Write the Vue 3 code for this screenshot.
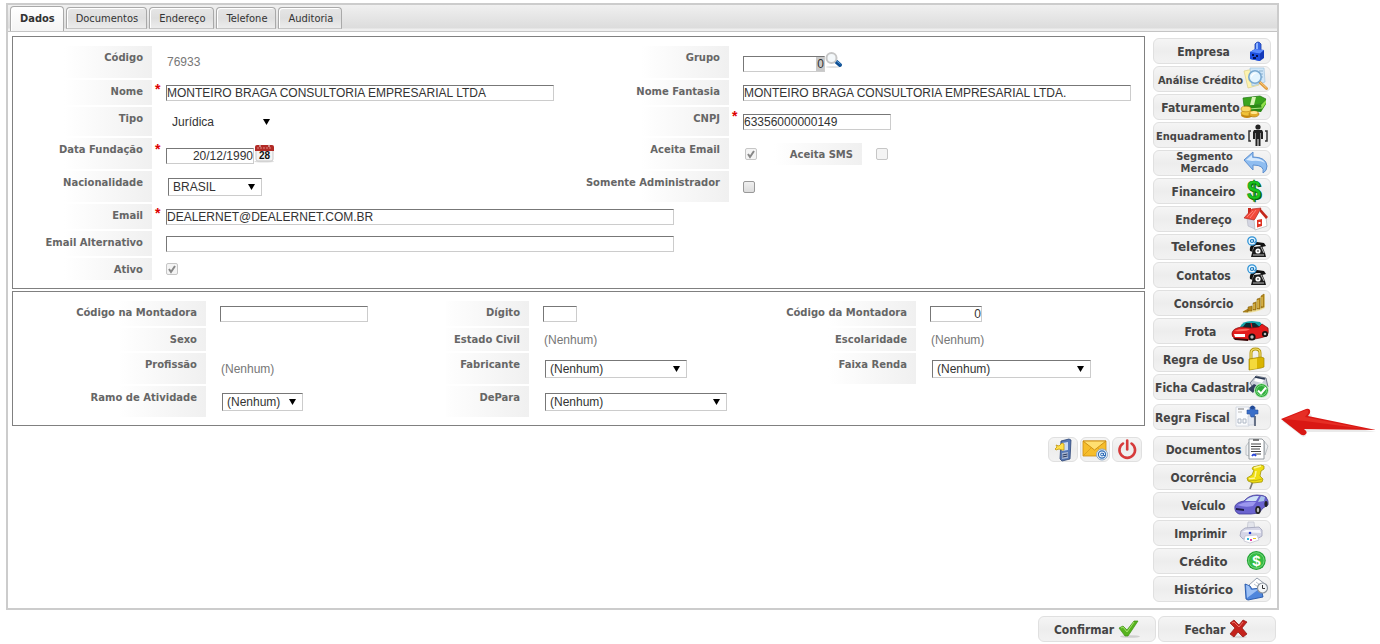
<script setup>
import { ref } from 'vue'

const tabs = ['Dados', 'Documentos', 'Endereço', 'Telefone', 'Auditoria']
const activeTab = ref('Dados')

const form = ref({
  grupo: '0',
  nome: 'MONTEIRO BRAGA CONSULTORIA EMPRESARIAL LTDA',
  fantasia: 'MONTEIRO BRAGA CONSULTORIA EMPRESARIAL LTDA.',
  cnpj: '63356000000149',
  data: '20/12/1990',
  email: 'DEALERNET@DEALERNET.COM.BR',
  emailAlt: '',
  codMontadora: '',
  digito: '',
  codDaMontadora: '0',
})

const phoneArt = `
  <path d="M4 16c-1-5 3-9 7-9l7 1 2 3-4 1-2-2-4 0c-2 1-4 4-3 7z" fill="#111"/>
  <path d="M8 12l8-1 3 7 1 4H5l1-4z" fill="#1a1a1a"/>
  <circle cx="12" cy="16" r="2.600" fill="#fff"/><circle cx="12" cy="16" r="1.100" fill="#777"/>
  <path d="M7 20h11M15 12l3 6" stroke="#bbb" stroke-width="1" fill="none"/>
  <circle cx="6" cy="6" r="4.200" fill="#e9f6ff" stroke="#2f93d6" stroke-width="1.300"/>
  <circle cx="6" cy="6" r="1.500" fill="none" stroke="#1577bd" stroke-width="1.200"/>
  <path d="M7.600 4.500v2.200q1 1.400 2-.2" fill="none" stroke="#1577bd" stroke-width="1"/>`

const actions = [
  { label: 'Empresa', w: 26, art: `
    <path d="M11 5q3-4 6 0v7h-6z" fill="#3567e8" stroke="#173aa8" stroke-width=".8"/>
    <path d="M12 5q1-2 2-1v7h-2z" fill="#8fb4ff"/>
    <path d="M6 13l5-3 9 1v8l-4 3-10-2z" fill="#1238b8"/>
    <path d="M6 13l10 1.500v7.500l-10-2z" fill="#1d4fe0"/>
    <path d="M6 13l5-3 9 1-4 3.500z" fill="#5a8bff"/>
    <path d="M8 15h2v2H8zM12 16h2v2h-2zM9 18h3v2H9z" fill="#06124e"/>` },
  { label: 'Análise Crédito', size: 'small', w: 26, snug: true, art: `
    <path d="M0 4l10-2 5 16-11 3z" fill="#fdf3b0" stroke="#dccf86" stroke-width=".7"/>
    <path d="M6 1l14 0 1 14-13 4z" fill="#cfe6f8" stroke="#9fc2de" stroke-width=".7"/>
    <path d="M15 4h4M16 7h3M16 10h3" stroke="#8db2cf" stroke-width="1"/>
    <path d="M15.500 15l7 6.500" stroke="#e09a3a" stroke-width="3" stroke-linecap="round"/>
    <path d="M15.500 14.500l7 6.500" stroke="#f7cc86" stroke-width="1"/>
    <circle cx="11" cy="10" r="6.200" fill="#e4f5ff" stroke="#7aa9d0" stroke-width="1.600"/>
    <path d="M7 9q2-4 6-3-4 1-6 5z" fill="#fff"/>` },
  { label: 'Faturamento', w: 30, snug: true, art: `
    <path d="M3 3l17-2 6 3-4 5-18 2z" fill="#3aa51d" stroke="#1d7410" stroke-width=".7"/>
    <path d="M4 11l18-2 4-5v5l-5 8-16-1z" fill="#2b8a14"/>
    <path d="M21 10l5-5v3l-4 6z" fill="#8fe04a"/>
    <path d="M12 2l4 0-2 8-4 0z" fill="#d8f3b6"/>
    <path d="M8 14l14-1" stroke="#a9e37f" stroke-width="1"/>
    <ellipse cx="7" cy="20" rx="6" ry="3" fill="#c98a12"/><ellipse cx="7" cy="18" rx="6" ry="3" fill="#f0c23a" stroke="#b57c0e" stroke-width=".6"/>
    <ellipse cx="6" cy="14" rx="5" ry="2.800" fill="#f9da68" stroke="#b57c0e" stroke-width=".6"/>
    <ellipse cx="14" cy="19" rx="5" ry="3" fill="#e3aa28" stroke="#a8730c" stroke-width=".6"/>
    <ellipse cx="14" cy="17.500" rx="3.500" ry="1.600" fill="#ffe68c"/>` },
  { label: 'Enquadramento', size: 'small', w: 26, snug: true, art: `
    <path d="M7 8H5v10h2M21 8h2v10h-2" fill="none" stroke="#333" stroke-width="1.500"/>
    <circle cx="14" cy="4" r="2.600" fill="#222"/>
    <path d="M10 7h8l1 2v7h-2v-6h-.5v13h-2v-7h-1v7h-2V10H11v6H9V9z" fill="#222"/>` },
  { label: 'Segmento Mercado', size: 'wrap', w: 26, art: `
    <path d="M0 9l9-8v5q13 0 14 9 0 5-4 7 2-8-10-8v5z" fill="#8fbdf0" stroke="#5c8fd0" stroke-width="1" stroke-linejoin="round"/>
    <path d="M2 9l6-5v3q10 0 13 5-5-3-13-2z" fill="#d8eafd"/>` },
  { label: 'Financeiro', w: 26, art: `
    <text x="11" y="21" text-anchor="middle" font-family="Liberation Sans, sans-serif" font-size="26" font-weight="700" fill="#0b5d0b">$</text>
    <text x="10" y="20" text-anchor="middle" font-family="Liberation Sans, sans-serif" font-size="25" font-weight="700" fill="#19c51c" stroke="#0b7a0d" stroke-width=".5">$</text>` },
  { label: 'Endereço', w: 26, art: `
    <path d="M3 11l8 1v10l-7-3z" fill="#d4d6e2" stroke="#a9abb8" stroke-width=".5"/>
    <path d="M10 12l6-8 6 6 1 9-12 4z" fill="#fff" stroke="#b5b5b5" stroke-width=".7"/>
    <path d="M16 1l8 9-2 2-6-7z" fill="#c4281c"/>
    <path d="M0 11L8 2l9-1-6 11-1 1z" fill="#f2493a" stroke="#a81f17" stroke-width=".6"/>
    <path d="M3 10l6-6M6 11l6-8" stroke="#ff9186" stroke-width=".8"/>
    <path d="M4 1h3v3L4 7z" fill="#c8291d"/>
    <path d="M13 13l5-1v7l-5 1.500z" fill="#df3324"/><path d="M14.500 15h2v2h-2z" fill="#fff"/>` },
  { label: 'Telefones', size: 'wide', w: 24, art: phoneArt },
  { label: 'Contatos', w: 24, art: phoneArt },
  { label: 'Consórcio', w: 28, art: `
    <path d="M0 21q3-3 7-3l4-3 3-5 3-2 3-4 3-1v14l-4 2-3 1-4 1-6 1z" fill="#efdf9b"/>
    <path d="M1 21l5-3v3zM6 20v-4l4-1v5zM11 19v-7l3-1v8zM15 18V8l3-1v11zM19 17V5l3-2v13z" fill="#b98a1c" stroke="#7b5a0e" stroke-width=".5"/>
    <path d="M12 13v5M16 9v8M20 6v9" stroke="#ecd06a" stroke-width="1"/>` },
  { label: 'Frota', size: 'early', w: 39, art: `
    <path d="M9 8q2-6 12-6l8 1 5 6z" fill="#15a3a8"/>
    <path d="M11 9l4-5h9l6 5z" fill="#0c2b33"/><path d="M20 4l1 5" stroke="#e22" stroke-width="1.200"/>
    <path d="M1 14q1-5 10-6l9 1 8-1 3-3 6 4q1 5-1 8l-7 2-11 2-13-1q-5-2-4-6z" fill="#e21c1c" stroke="#7d0b0b" stroke-width=".7"/>
    <path d="M3 12q6-3 16-2-3 3-16 2z" fill="#ff6a5c"/>
    <path d="M3 15h11v3H4z" fill="#fff"/><path d="M2 19l15 1v2L4 21z" fill="#3a0707"/>
    <circle cx="21" cy="18" r="3.600" fill="#111"/><circle cx="21" cy="18" r="1.700" fill="#bbb"/>
    <circle cx="34" cy="15" r="3" fill="#111"/><circle cx="34" cy="15" r="1.300" fill="#bbb"/>` },
  { label: 'Regra de Uso', w: 26, art: `
    <path d="M7 12V6q0-4 4.500-4T16 6v6" fill="none" stroke="#b3960c" stroke-width="3"/>
    <path d="M7 12V6q0-4 4.500-4T16 6v6" fill="none" stroke="#f5e272" stroke-width="1.200"/>
    <path d="M5 12l12-2 3 1v9l-3 1-12 2z" fill="#d9b400" stroke="#a48600" stroke-width=".7"/>
    <path d="M6 12.500l7-1v10l-7 1z" fill="#f4d93c"/>` },
  { label: 'Ficha Cadastral', w: 24, start: true, art: `
    <path d="M4 8l6-7 10 2 2 9-12 5z" fill="#c9ced8" stroke="#596273" stroke-width=".8"/>
    <path d="M10 3l8 2-2 3-8-2z" fill="#fff"/><path d="M9 2l10 2" stroke="#28364f" stroke-width="1.300"/>
    <path d="M2 14l6-5 4 2-5 7z" fill="#33415e"/>
    <circle cx="15.500" cy="15.500" r="7" fill="#2fae3a" stroke="#d9f1da" stroke-width="1"/>
    <circle cx="15.500" cy="15.500" r="5" fill="none" stroke="#8edb93" stroke-width=".8"/>
    <path d="M12 15.500l3 3 5-6" fill="none" stroke="#fff" stroke-width="2"/>` },
  { label: 'Regra Fiscal', w: 34, start: true, fiscal: true, art: `
    <path d="M0 2h13v19H0z" fill="#fafbfd" stroke="#cdd3dc" stroke-width=".8"/>
    <path d="M2 4h6" stroke="#777" stroke-width="1"/><path d="M2 7h4" stroke="#bbb"/>
    <path d="M2 14h3v4H2zM7 14h3v4H7z" fill="none" stroke="#aeb7c4" stroke-width="1"/>
    <path d="M12 11h6v9h-6z" fill="#e5e9f0" stroke="#c3cad6" stroke-width=".6"/><path d="M19 11v10" stroke="#3b4a66" stroke-width="1.500"/>
    <path d="M14 2h5v3h3v4h-3l-1 3h-3l-1-3h-3V5h3z" fill="#3b6fc9" stroke="#2a519c" stroke-width=".6"/>
    <circle cx="16.500" cy="2.500" r="2" fill="#234a94"/>` },
  { label: 'Documentos', w: 26, above: true, art: `
    <path d="M2 9l3-4v14l-3-1zM20 4l4 5-3 9z" fill="#eef0f2" stroke="#aab0b6" stroke-width=".7"/>
    <path d="M5 2h13l2 2v18H5z" fill="#fff" stroke="#8d9399" stroke-width=".9"/>
    <path d="M9 3h6" stroke="#555" stroke-width="1.500"/>
    <path d="M7 7h10M7 9.500h10M7 12h9M7 14.500h10M11 17h6" stroke="#444" stroke-width="1.200"/>
    <path d="M8 19q2-3 4 0" stroke="#2844d8" stroke-width="1.800" fill="none"/>` },
  { label: 'Ocorrência', w: 26, art: `
    <path d="M9 16l-3 8" stroke="#777" stroke-width="1.700"/>
    <path d="M9 2l8-2 3 1 0 3-3 2-1 5 3 3-1 3-9 1-5-2-1-3 5-3 2-5-2-1z" fill="#efdd12" stroke="#a59708" stroke-width=".8"/>
    <path d="M10 3l7-2M12 6l-1 6M5 14l6-1" stroke="#fff89a" stroke-width="1.500" fill="none"/>
    <path d="M4 15q7 2 14-1" stroke="#b7a80c" stroke-width=".8" fill="none"/>` },
  { label: 'Veículo', w: 36, art: `
    <path d="M1 13q2-4 9-5 5-6 13-6 7 0 9 2 3 4 2 8l-5 3-4 5-8 1H5q-5-2-4-8z" fill="#6a63cf" stroke="#403a98" stroke-width=".8"/>
    <path d="M11 8q5-5 12-5l2 0-3 5z" fill="#cfe3f7"/><path d="M27 3l4 1-1 4-6 1z" fill="#aac4ea"/>
    <path d="M3 12q9-4 19-3l-3 4q-8 2-16-1z" fill="#9c97ee"/>
    <path d="M2 15l8 1v2l-8-1z" fill="#1e1c48"/>
    <ellipse cx="24" cy="17" rx="2.800" ry="4" fill="#222"/><ellipse cx="24" cy="17" rx="1.200" ry="2.200" fill="#bbb"/>
    <ellipse cx="32" cy="11" rx="1.600" ry="3" fill="#222"/>` },
  { label: 'Imprimir', size: 'early', w: 30, art: `
    <path d="M8 1h6l1 9H7z" fill="#e3e5ec" stroke="#bfc2cd" stroke-width=".7"/>
    <path d="M1 10l4-3 14-1 3 3v6l-5 3H3l-3-3z" fill="#d5d6e6" stroke="#9d9fb8" stroke-width=".8"/>
    <path d="M2 11l4-2 14 0 1 3z" fill="#f5f5fb"/><circle cx="10" cy="12" r="1.300" fill="#2338cc"/>
    <path d="M5 15l12-1 2 5-9 3-6-2z" fill="#fff" stroke="#b7b7c8" stroke-width=".6"/>
    <path d="M7 17h2v2H7z" fill="#33b5d9"/><path d="M10 18h2v2h-2z" fill="#e040a0"/><path d="M13 17h3v1h-3z" fill="#e8c81e"/>` },
  { label: 'Crédito', size: 'large', w: 26, art: `
    <circle cx="12.300" cy="11.500" r="9.400" fill="#1fa331"/><circle cx="12.300" cy="11.500" r="7.800" fill="#35bd43" stroke="#8fe096" stroke-width=".8"/>
    <text x="12.300" y="17" text-anchor="middle" font-family="Liberation Sans, sans-serif" font-size="15" font-weight="700" fill="#fff">$</text>` },
  { label: 'Histórico', size: 'large', w: 26, art: `
    <path d="M5 8l8-7 8 6-4 9-10 2z" fill="#fff" stroke="#8b95a5" stroke-width=".9"/>
    <path d="M10 7l4 3M12 5l4 3" stroke="#b9c2ce"/>
    <path d="M1 7l5 2 2 3 9-1 2 9-15 3-2-1z" fill="#4f86dc" stroke="#2456a8" stroke-width=".9"/>
    <path d="M2 8l3 1 2 4 8-1-12 9z" fill="#9cc0f5"/>
    <circle cx="18.500" cy="11" r="5" fill="#f4f6f8" stroke="#8b939d" stroke-width="1.200"/>
    <path d="M18.500 8v3.500h2.500" fill="none" stroke="#333" stroke-width="1"/>` },
]

const tools = [
  { label: 'Enviar SMS', art: `
    <path d="M10 3l8-2 2 1-1 19-8 2-2-2z" fill="#5577b4" stroke="#2c4474" stroke-width=".8"/>
    <path d="M11 5l6-1v8l-6 1z" fill="#c9dbf3"/><path d="M11 15l6-1v6l-6 1z" fill="#a9b7d2"/>
    <path d="M11.500 17l5-1M11.500 19l5-1" stroke="#28395f" stroke-width="1"/>
    <path d="M5 7l3 1 3-3 2 1 0 6-2 0-3-1-3 1-1-1 2-2z" fill="#ffe04a" stroke="#c29512" stroke-width=".8"/>` },
  { label: 'Enviar e-mail', art: `
    <path d="M0 3h23v15H0z" fill="#f6bd2b" stroke="#cf8d0c" stroke-width=".8"/>
    <path d="M0 3l11.500 9L23 3z" fill="#ffdf70" stroke="#c98b10" stroke-width=".9"/>
    <path d="M0 18l8-8M23 18l-8-8" stroke="#d99c1c" stroke-width=".8"/>
    <circle cx="19" cy="16.500" r="5.500" fill="#e7f1fb" stroke="#8fa9c6" stroke-width="1"/>
    <circle cx="19" cy="16.500" r="3.600" fill="none" stroke="#2d6bb5" stroke-width="1.100"/>
    <circle cx="19" cy="16.500" r="1.400" fill="none" stroke="#2d6bb5" stroke-width="1"/><path d="M20.500 15v2.500h1.500" fill="none" stroke="#2d6bb5"/>` },
  { label: 'Desativar', art: `
    <path d="M8 5.500a7.800 7.800 0 1 0 8.500 0" fill="none" stroke="#d63a3a" stroke-width="2.600" stroke-linecap="round"/>
    <path d="M12.200 2.500v9" stroke="#d63a3a" stroke-width="2.600" stroke-linecap="round"/>` },
]
</script>

<template>
  <div class="page">
    <main class="frame">
      <nav class="tabs" role="tablist">
        <button
          v-for="t in tabs" :key="t" type="button" role="tab" class="tab"
          :class="{ active: t === activeTab }" :aria-selected="t === activeTab"
          @click="activeTab = t"
        >{{ t }}</button>
      </nav>

      <div class="body">
        <form class="forms" @submit.prevent>
          <section class="box main-data">
            <span class="lbl">Código</span>
            <div class="val"><i class="req"></i><span class="ro">76933</span></div>
            <label class="lbl" for="grupo">Grupo</label>
            <div class="val lookup">
              <i class="req"></i><input id="grupo" v-model="form.grupo" class="txt num w-group marked">
              <button type="button" class="mini" aria-label="Pesquisar grupo">
                <svg width="19" height="19" viewBox="0 0 19 19">
                  <ellipse cx="8" cy="15" rx="7" ry="1" fill="#e2e2e2" />
                  <path d="M11 9.500l4 3.500" stroke="#0d4f94" stroke-width="4" stroke-linecap="round" />
                  <path d="M11.500 9l4 3" stroke="#5f9ed8" stroke-width="1" />
                  <circle cx="6.500" cy="6" r="5" fill="#f4f8fa" stroke="#c6c6c6" stroke-width="2" />
                </svg>
              </button>
            </div>

            <label class="lbl" for="nome">Nome</label>
            <div class="val"><i class="req">*</i><input id="nome" v-model="form.nome" class="txt w-name"></div>
            <label class="lbl" for="fantasia">Nome Fantasia</label>
            <div class="val"><i class="req"></i><input id="fantasia" v-model="form.fantasia" class="txt w-name"></div>

            <label class="lbl" for="tipo">Tipo</label>
            <div class="val"><i class="req"></i><select id="tipo" class="sel plain w-tipo"><option>Jurídica</option></select></div>
            <label class="lbl" for="cnpj">CNPJ</label>
            <div class="val"><i class="req">*</i><input id="cnpj" v-model="form.cnpj" class="txt w-code"></div>

            <label class="lbl" for="data">Data Fundação</label>
            <div class="val lookup">
              <i class="req">*</i><input id="data" v-model="form.data" class="txt num w-date">
              <button type="button" class="mini" aria-label="Abrir calendário">
                <svg width="21" height="19" viewBox="0 0 21 19">
                  <ellipse cx="10" cy="17.500" rx="10" ry="1" fill="#ddd" />
                  <rect x="2" y="3" width="17" height="14" rx="2" fill="#f4f4f4" stroke="#c9c9c9" />
                  <path d="M1 7V3q0-2 2-2h15q2 0 2 2v4z" fill="#b22a25" />
                  <path d="M3 4h15" stroke="#dc8a86" stroke-dasharray="2 1" />
                  <path d="M6 0v3M15 0v3" stroke="#eee" stroke-width="1" />
                  <text x="10.500" y="15" text-anchor="middle" class="cal-day">28</text>
                </svg>
              </button>
            </div>
            <label class="lbl" for="aceita-email">Aceita Email</label>
            <div class="val">
              <i class="req"></i><input id="aceita-email" type="checkbox" class="chk inset" checked disabled>
              <label class="lbl sms" for="aceita-sms">Aceita SMS</label>
              <input id="aceita-sms" type="checkbox" class="chk" disabled>
            </div>

            <label class="lbl" for="nac">Nacionalidade</label>
            <div class="val"><i class="req"></i><select id="nac" class="sel w-nac"><option>BRASIL</option></select></div>
            <label class="lbl" for="adm">Somente Administrador</label>
            <div class="val"><i class="req"></i><input id="adm" type="checkbox" class="chk"></div>

            <label class="lbl" for="email">Email</label>
            <div class="val span"><i class="req">*</i><input id="email" v-model="form.email" class="txt w-mail"></div>
            <label class="lbl" for="email-alt">Email Alternativo</label>
            <div class="val span"><i class="req"></i><input id="email-alt" v-model="form.emailAlt" class="txt w-mail"></div>
            <label class="lbl" for="ativo">Ativo</label>
            <div class="val span"><i class="req"></i><input id="ativo" type="checkbox" class="chk" checked disabled></div>
          </section>

          <section class="box extra-data">
            <label class="lbl" for="cod-na">Código na Montadora</label>
            <div class="val"><i class="req"></i><input id="cod-na" v-model="form.codMontadora" class="txt w-code"></div>
            <label class="lbl" for="digito">Dígito</label>
            <div class="val"><i class="req"></i><input id="digito" v-model="form.digito" class="txt w-digit"></div>
            <label class="lbl" for="cod-da">Código da Montadora</label>
            <div class="val"><i class="req"></i><input id="cod-da" v-model="form.codDaMontadora" class="txt num w-maker"></div>

            <span class="lbl">Sexo</span>
            <div class="val"></div>
            <span class="lbl">Estado Civil</span>
            <div class="val"><i class="req"></i><span class="ro">(Nenhum)</span></div>
            <span class="lbl">Escolaridade</span>
            <div class="val"><i class="req"></i><span class="ro">(Nenhum)</span></div>

            <span class="lbl">Profissão</span>
            <div class="val"><i class="req"></i><span class="ro">(Nenhum)</span></div>
            <label class="lbl" for="fabricante">Fabricante</label>
            <div class="val"><i class="req"></i><select id="fabricante" class="sel w-fab"><option>(Nenhum)</option></select></div>
            <label class="lbl" for="renda">Faixa Renda</label>
            <div class="val"><i class="req"></i><select id="renda" class="sel w-renda"><option>(Nenhum)</option></select></div>

            <label class="lbl" for="ramo">Ramo de Atividade</label>
            <div class="val"><i class="req"></i><select id="ramo" class="sel w-ramo"><option>(Nenhum)</option></select></div>
            <label class="lbl" for="depara">DePara</label>
            <div class="val"><i class="req"></i><select id="depara" class="sel w-depara"><option>(Nenhum)</option></select></div>
          </section>

          <div class="tools">
            <button v-for="t in tools" :key="t.label" type="button" class="btn tool" :aria-label="t.label">
              <svg width="25" height="23" viewBox="0 0 25 23" v-html="t.art"></svg>
            </button>
          </div>
        </form>

        <aside class="actions">
          <div v-for="a in actions" :key="a.label" class="action" :class="{ fiscal: a.fiscal, above: a.above }">
            <button type="button" class="btn side" :class="[a.size, { snug: a.snug, start: a.start }]">
              <span>{{ a.label }}</span>
              <svg :width="a.w" height="24" :viewBox="`0 0 ${a.w} 24`" v-html="a.art"></svg>
            </button>
            <svg v-if="a.fiscal" class="pointer" width="96" height="32" viewBox="0 0 96 32">
              <path d="M1 14L27 3l4 6-2 4 66 12-72 0 2 4-3 1z" fill="#b9b9b9" opacity=".3" />
              <path d="M0 12L25 2q5-1 4 4l-2 3 68 14-72-1q4 3 2 5-3 3-7-1z" fill="#d91814" />
              <path d="M3 12l22-9q3 0 2 3l-3 4 60 12-60-8z" fill="#e62e25" />
            </svg>
          </div>
        </aside>
      </div>
    </main>

    <footer class="footer">
      <button type="button" class="btn foot">
        <span>Confirmar</span>
        <svg width="22" height="20" viewBox="0 0 22 20">
          <ellipse cx="12" cy="17.500" rx="10" ry="1.300" fill="#cfcfcf" />
          <path d="M1 9l4-2 4 4 7-9 4 0-10 15h-3z" fill="#56b31e" stroke="#3c8f12" stroke-width=".7" />
          <path d="M3 9l2-1 4 5 7-10" fill="none" stroke="#a2e26a" stroke-width="1" />
        </svg>
      </button>
      <button type="button" class="btn foot">
        <span>Fechar</span>
        <svg width="20" height="20" viewBox="0 0 20 20">
          <ellipse cx="10" cy="18" rx="8" ry="1.200" fill="#d8d8d8" />
          <path d="M1 4l4-3 5 5 4-5 4 2-5 6 5 6-4 3-5-5-4 5-4-3 5-6z" fill="#c4221c" stroke="#8d120e" stroke-width=".7" />
          <path d="M3 4l2-1 5 5 4-5" fill="none" stroke="#ea6f66" stroke-width="1" />
        </svg>
      </button>
    </footer>
  </div>
</template>

<style>
body { background: #fff; }
</style>

<style scoped>
* { box-sizing: border-box; }
.page {
  padding: 3px 101px 0 6px;
  font-family: "Liberation Sans", Arial, sans-serif;
  font-size: 12px;
  color: #333;
}
button, input, select { font: inherit; color: inherit; margin: 0; }
button { cursor: pointer; }

.frame { border: 2px solid #ccc; background: #fff; }

.tabs {
  display: flex;
  align-items: flex-end;
  gap: 2px;
  height: 27px;
  padding: 2px 2px 0;
  border-bottom: 1px solid #c4c4c4;
  background: linear-gradient(#f0f0f0, #dcdcdc 23px, #efefef 24px);
}
.tab {
  height: 22px;
  margin-bottom: 2px;
  padding: 1px 8px 0 9px;
  border: 1px solid #a9a9a9;
  border-bottom-color: #c4c4c4;
  border-radius: 4px 4px 0 0;
  background: linear-gradient(#e6e6e6, #dedede 50%, #ececec);
  box-shadow: inset 1px 1px 0 #fff;
  font-family: "DejaVu Sans Condensed", "DejaVu Sans", sans-serif;
  font-size: 11px;
}
.tab.active {
  height: 25px;
  margin-bottom: 0;
  padding-bottom: 2px;
  border-bottom: 0;
  background: linear-gradient(#fff, #f4f4f4);
  font-weight: 700;
}

.body { display: flex; align-items: flex-start; gap: 8px; padding: 4px 6px 6px 4px; }
.forms { flex: 1; min-width: 0; }

.box {
  display: grid;
  gap: 2px;
  padding: 9px 0 8px;
  border: 1px solid #808080;
}
.main-data {
  grid-template-columns: 139px 425fr 148px 413fr;
  grid-template-rows: 32px 25px 29px 31px 31px 25px 25px 22px;
}
.extra-data {
  grid-template-columns: 193px 236fr 83px 243fr 140px 226fr;
  grid-template-rows: 25px 23px 31px 31px;
  margin-top: 2px;
}

.lbl {
  padding: 6px 9px 0 0;
  background: linear-gradient(90deg, #fff, #f0f0f0) right / 88px 100% no-repeat;
  color: #666;
  font-family: "DejaVu Sans", Verdana, sans-serif;
  font-size: 10px;
  font-weight: 700;
  line-height: 12px;
  text-align: right;
  white-space: nowrap;
}
.sms { width: 88px; height: 22px; margin: 0 14px 0 17px; }

.val { display: flex; align-items: center; min-width: 0; }
.span { grid-column: span 3; }
.lookup { align-items: flex-start; padding-top: 6px; }
.lookup .txt { margin-top: 4px; }
.lookup .req { margin-top: -4px; }

.req {
  align-self: flex-start;
  flex: 0 0 12px;
  padding: 2px 0 0 1px;
  color: #d00;
  font-size: 14px;
  font-style: normal;
  font-weight: 700;
  line-height: 14px;
}
.ro { padding-left: 1px; color: #777; }

.txt {
  height: 16px;
  padding: 0;
  border: 1px solid #ccc;
  border-top-color: #777;
  border-left-color: #777;
  border-radius: 0;
  background: #fff;
  line-height: 14px;
  outline: none;
}
.num { text-align: right; }
.marked { background: linear-gradient(#c8c8c8, #c8c8c8) right / 8px 100% no-repeat; }
.w-group { width: 82px; }
.w-name { width: 388px; }
.w-code { width: 148px; }
.w-date { width: 88px; }
.w-mail { width: 508px; }
.w-digit { width: 34px; }
.w-maker { width: 52px; }

.sel {
  appearance: none;
  height: 18px;
  margin-left: 2px;
  padding: 0 16px 0 4px;
  border: 1px solid #ccc;
  border-top-color: #777;
  border-left-color: #777;
  border-radius: 0;
  background: #fff url("data:image/svg+xml,%3Csvg xmlns='http://www.w3.org/2000/svg' width='7' height='6'%3E%3Cpath d='M0 0h7L3.500 6z'/%3E%3C/svg%3E") right 6px center no-repeat;
  line-height: 16px;
}
.plain { padding-left: 3px; border-color: transparent; }
.w-tipo { width: 109px; }
.w-nac { width: 94px; }
.w-ramo { width: 81px; }
.w-fab { width: 142px; }
.w-depara { width: 182px; }
.w-renda { width: 159px; }

.chk {
  appearance: none;
  width: 12px;
  height: 12px;
  border: 1px solid #999;
  border-radius: 2px;
  background: linear-gradient(#f0f0f0, #dcdcdc);
}
.chk:disabled { border-color: #c6c6c6; background-color: #f4f4f4; background-image: none; }
.chk:checked {
  background-image: url("data:image/svg+xml,%3Csvg xmlns='http://www.w3.org/2000/svg' width='10' height='10'%3E%3Cpath d='M2 5l2 3 4-6' fill='none' stroke='%23888' stroke-width='2'/%3E%3C/svg%3E");
}
.inset { margin-left: 2px; }

.mini { display: block; padding: 0; border: 0; background: none; }
.mini svg { display: block; }
.cal-day { font: 700 10px "Liberation Sans", sans-serif; fill: #111; }

.btn {
  border: 1px solid #e0e0e0;
  border-radius: 6px;
  background: linear-gradient(#f5f5f5, #ededed 50%, #f2f2f2);
  color: #444;
  font-family: "DejaVu Sans Condensed", "DejaVu Sans", sans-serif;
  font-weight: 700;
}
.btn svg { display: block; overflow: visible; }

.tools { display: flex; justify-content: flex-end; gap: 2px; padding: 11px 3px 0; }
.tool { width: 30px; height: 25px; padding: 0 2px; }

.actions { display: flex; flex: 0 0 118px; flex-direction: column; gap: 2px; min-width: 0; padding-top: 2px; }
.action { position: relative; }
.fiscal { margin-top: 2px; }
.above { margin-top: 4px; }
.side {
  display: grid;
  grid-template-columns: minmax(0, 1fr);
  align-items: center;
  width: 100%;
  height: 26px;
  padding: 0;
  font-size: 12px;
  line-height: 13px;
}
.side span, .side svg { grid-area: 1 / 1; }
.side span { padding: 2px 17px 0 0; text-align: center; white-space: nowrap; }
.side svg { justify-self: end; }
.side.snug span, .side.early span { padding-right: 23px; }
.side.start span { padding: 2px 0 0 1px; text-align: left; }
.side.small { font-size: 11px; }
.side.large { font-size: 13px; }
.side.large span { padding-top: 0; }
.side.wrap { font-size: 11px; line-height: 12px; }
.side.wrap span { padding: 0 31px 0 16px; white-space: normal; }
.side.wide { font-family: "DejaVu Sans", Verdana, sans-serif; }
.side.wide span { padding-top: 0; }
.pointer { position: absolute; top: 3px; left: calc(100% + 10px); }

.footer { display: flex; justify-content: flex-end; gap: 2px; padding: 6px 3px 0; }
.foot {
  display: flex;
  align-items: center;
  justify-content: center;
  gap: 4px;
  width: 118px;
  height: 26px;
  padding: 0;
  font-size: 12px;
}
.foot span { padding-top: 2px; }
</style>
